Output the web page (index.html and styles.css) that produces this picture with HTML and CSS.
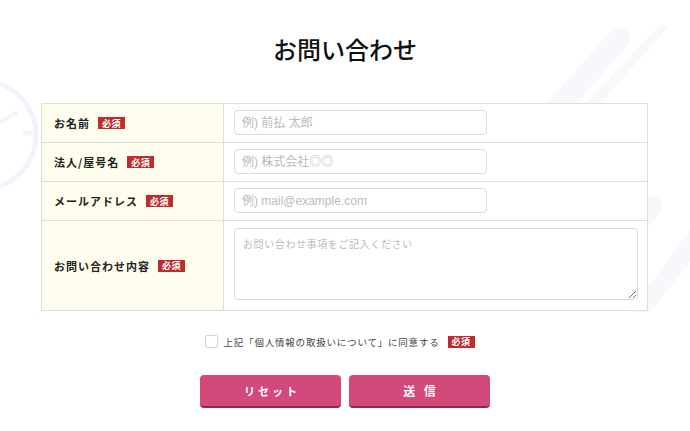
FILE: index.html
```html
<!DOCTYPE html>
<html lang="ja">
<head>
<meta charset="utf-8">
<title>お問い合わせ</title>
<link rel="stylesheet" href="styles.css">
</head>
<body>
<div class="page">
  <svg class="deco" width="690" height="431" viewBox="0 0 690 431" aria-hidden="true">
    <circle cx="-18" cy="135" r="54" fill="none" stroke="#f3f4fb" stroke-width="5"/>
    <line x1="0" y1="122" x2="16" y2="113" stroke="#f3f4fb" stroke-width="4" stroke-linecap="round"/>
    <line x1="25" y1="133" x2="30" y2="133" stroke="#f3f4fb" stroke-width="5" stroke-linecap="round"/>
    <line x1="619" y1="38" x2="530" y2="140" stroke="#f6f8fc" stroke-width="22" stroke-linecap="round"/>
    <polygon points="660,25 670,25 590,115 575,115" fill="#f6f8fc"/>
    <line x1="652" y1="206" x2="600" y2="268" stroke="#f6f8fc" stroke-width="20" stroke-linecap="round"/>
    <polygon points="690,230 690,262 650,312 630,312" fill="#f6f8fc"/>
  </svg>
  <main class="content">
    <h1 class="title">お問い合わせ</h1>
    <form class="form">
      <div class="table">
        <div class="row">
          <div class="label">お名前<span class="req">必須</span></div>
          <div class="field"><input class="input" type="text" placeholder="例) 前払 太郎"></div>
        </div>
        <div class="row">
          <div class="label">法人/屋号名<span class="req">必須</span></div>
          <div class="field"><input class="input" type="text" placeholder="例) 株式会社◎◎"></div>
        </div>
        <div class="row">
          <div class="label">メールアドレス<span class="req">必須</span></div>
          <div class="field"><input class="input" type="email" placeholder="例) mail@example.com"></div>
        </div>
        <div class="row row-tall">
          <div class="label">お問い合わせ内容<span class="req">必須</span></div>
          <div class="field field-tall"><textarea class="textarea" placeholder="お問い合わせ事項をご記入ください"></textarea></div>
        </div>
      </div>
      <label class="agree"><input class="check" type="checkbox"><span class="agree-text">上記「個人情報の取扱いについて」に同意する</span><span class="req">必須</span></label>
      <div class="buttons">
        <button type="reset" class="btn">リセット</button>
        <button type="submit" class="btn btn-send">送 信</button>
      </div>
    </form>
  </main>
</div>
</body>
</html>
```
FILE: styles.css
```css
* { box-sizing: border-box; }
html, body { margin: 0; padding: 0; background: #fff; }
body {
  font-family: "Liberation Sans", "Noto Sans CJK JP", sans-serif;
  color: #222;
}
.page {
  position: relative;
  width: 690px;
  height: 431px;
  overflow: hidden;
}
.deco {
  position: absolute;
  left: 0;
  top: 0;
  z-index: 0;
}
.content {
  position: relative;
  z-index: 1;
  padding-top: 31px;
}
.title {
  margin: 0;
  font-family: "Noto Sans CJK JP", sans-serif;
  font-size: 24px;
  line-height: 36px;
  font-weight: 500;
  text-align: center;
  color: #111;
}
.form {
  margin-top: 36px;
}
.table {
  width: 607px;
  margin: 0 0 0 41px;
  border: 1px solid #dedede;
  background: #fff;
}
.row {
  display: flex;
  border-top: 1px solid #dedede;
}
.row:first-child { border-top: none; }
.label {
  width: 182px;
  flex: none;
  display: flex;
  align-items: center;
  padding-left: 12px;
  background: #fffeee;
  border-right: 1px solid #dedede;
  font-family: "Noto Sans CJK JP", sans-serif;
  font-size: 11px;
  font-weight: 700;
  letter-spacing: 1px;
  color: #222;
}
.req {
  display: inline-flex;
  align-items: center;
  justify-content: center;
  width: 27px;
  height: 12px;
  margin-left: 8px;
  background: #bd2d2f;
  color: #fff;
  font-family: "Noto Sans CJK JP", sans-serif;
  font-size: 9px;
  font-weight: 700;
  letter-spacing: 0.5px;
  line-height: 1;
}
.field {
  flex: 1;
  padding: 6px 10px 7px 10px;
}
.input {
  display: block;
  width: 253px;
  height: 25px;
  margin: 0;
  padding: 0 7px;
  border: 1px solid #dcdcdc;
  border-radius: 4px;
  font-family: "Liberation Sans", "Noto Sans CJK JP", sans-serif;
  font-size: 12px;
  color: #333;
  background: #fff;
  outline: none;
}
.input::placeholder, .textarea::placeholder { color: #bbb; }
.field-tall { padding: 7px 10px 10px 10px; }
.textarea {
  display: block;
  width: 404px;
  height: 72px;
  margin: 0;
  padding: 7px 8px;
  border: 1px solid #dcdcdc;
  border-radius: 4px;
  font-family: "Noto Sans CJK JP", sans-serif;
  font-size: 10px;
  letter-spacing: 0.6px;
  color: #333;
  background: #fff;
  outline: none;
}
.agree {
  display: flex;
  align-items: center;
  justify-content: center;
  margin-top: 24px;
  height: 13px;
  padding-right: 10px;
  font-family: "Noto Sans CJK JP", sans-serif;
  font-size: 9.5px;
  letter-spacing: 0.8px;
  color: #444;
}
.check {
  appearance: none;
  -webkit-appearance: none;
  width: 13px;
  height: 13px;
  margin: 0 5px 0 0;
  border: 1px solid #d4d4d4;
  border-radius: 2px;
  background: #fff;
}
.agree .req { margin-left: 8px; }
.buttons {
  display: flex;
  justify-content: center;
  gap: 8px;
  margin-top: 27px;
}
.btn {
  width: 141px;
  height: 33px;
  margin: 0;
  border: none;
  border-bottom: 2px solid #9d1f4c;
  border-radius: 4px;
  background: #d3497b;
  color: #fff;
  font-family: "Noto Sans CJK JP", sans-serif;
  font-size: 11px;
  font-weight: 700;
  letter-spacing: 3px;
  padding: 0 0 0 3px;
  cursor: pointer;
}
.btn-send { font-size: 12px; }
```
